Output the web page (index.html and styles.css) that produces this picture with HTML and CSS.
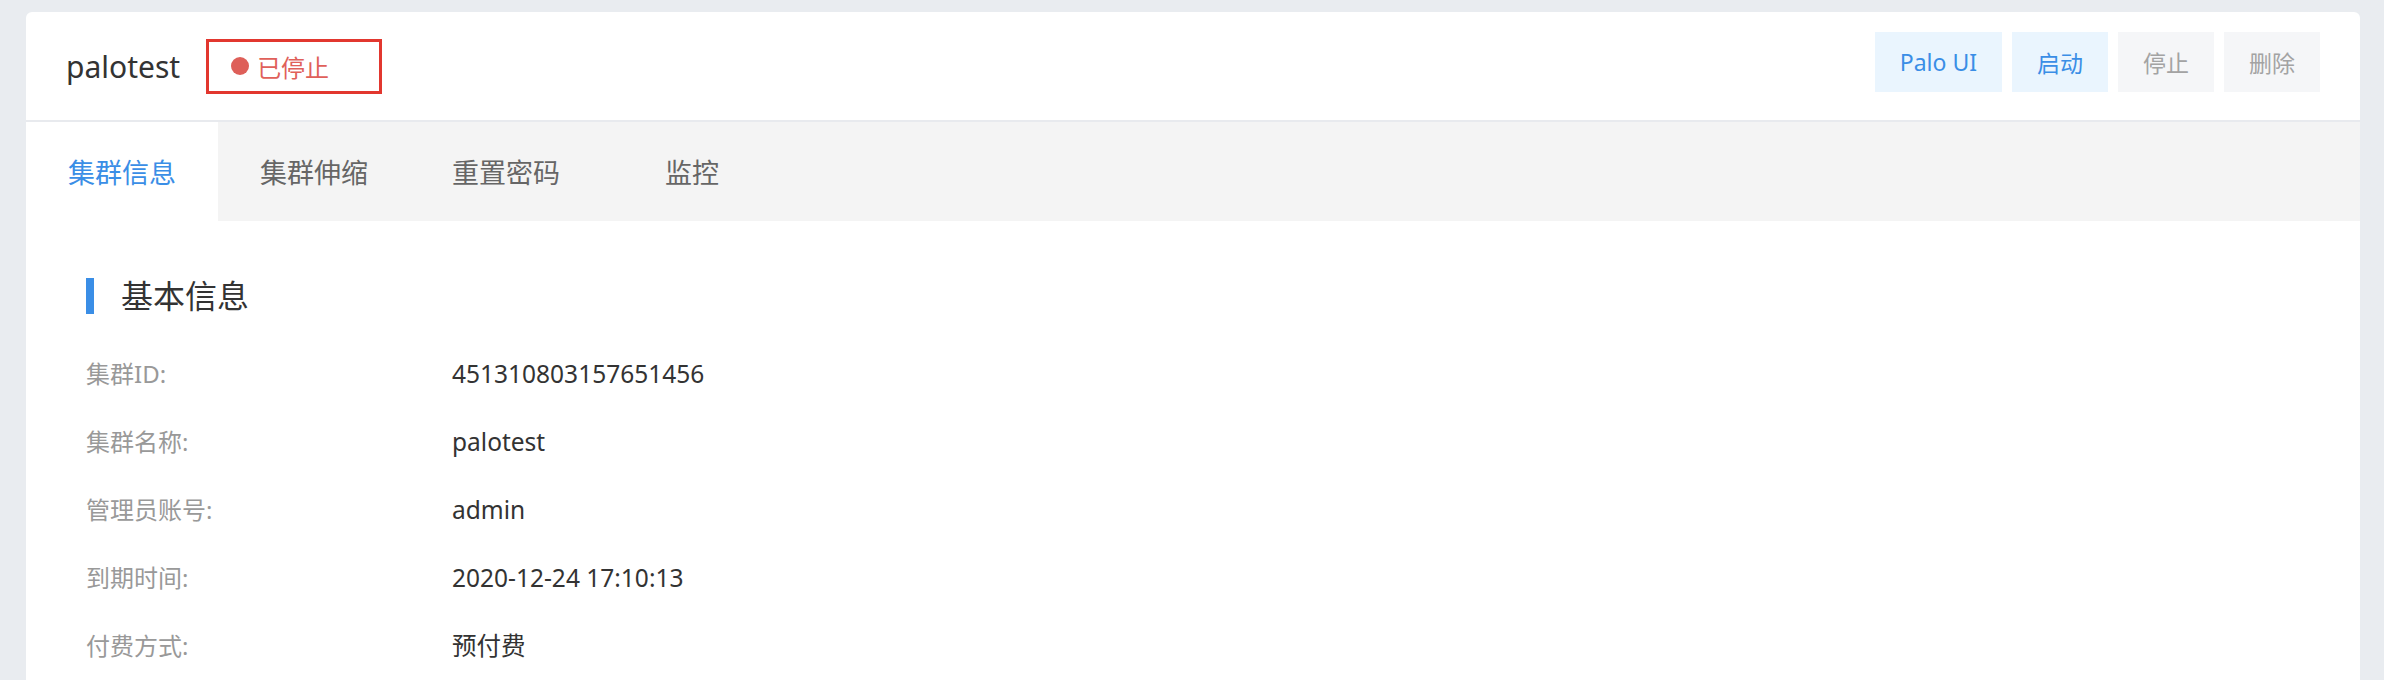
FILE: index.html
```html
<!DOCTYPE html>
<html>
<head>
    <link rel="stylesheet" href="styles.css">
</head>
<body>

<div class="card">
    <div class="header">
        <div class="title">palotest</div>
        <div class="status"><span class="dot"></span>已停止</div>
        <div class="actions">
            <button class="btn btn-primary">Palo UI</button>
            <button class="btn btn-primary">启动</button>
            <button class="btn btn-disabled">停止</button>
            <button class="btn btn-disabled">删除</button>
        </div>
    </div>

    <div class="tabs">
        <div class="tab active">集群信息</div>
        <div class="tab">集群伸缩</div>
        <div class="tab">重置密码</div>
        <div class="tab tab-last">监控</div>
    </div>

    <div class="content">
        <div class="section-title">基本信息</div>
        <div class="info">
            <div class="row"><span class="label">集群ID:</span><span class="value">451310803157651456</span></div>
            <div class="row"><span class="label">集群名称:</span><span class="value">palotest</span></div>
            <div class="row"><span class="label">管理员账号:</span><span class="value">admin</span></div>
            <div class="row"><span class="label">到期时间:</span><span class="value">2020-12-24 17:10:13</span></div>
            <div class="row"><span class="label">付费方式:</span><span class="value">预付费</span></div>
        </div>
    </div>
</div>

</body>
</html>
```

FILE: styles.css
```css
body {
    font-family: "Noto Sans", "Noto Sans CJK SC", sans-serif;
    margin: 0;
    padding: 12px 24px 0 26px;
    background-color: #e9ecf0;
    color: #333;
    height: 668px;
    overflow: hidden;
}
.card {
    background-color: #fff;
    border-radius: 6px 6px 0 0;
    min-height: 800px;
}
.header {
    display: flex;
    align-items: center;
    height: 108px;
    padding: 0 40px 0 40px;
    border-bottom: 2px solid #e8eaee;
}
.title {
    font-size: 30px;
    color: #333;
}
.status {
    display: flex;
    align-items: center;
    box-sizing: border-box;
    height: 55px;
    margin-left: 26px;
    padding: 0 50px 0 22px;
    border: 3px solid #e2372f;
    font-size: 24px;
    color: #e0605a;
}
.dot {
    width: 18px;
    height: 18px;
    border-radius: 50%;
    background-color: #de5f59;
    margin-right: 8px;
}
.actions {
    display: flex;
    gap: 10px;
    margin-left: auto;
    align-self: flex-start;
    margin-top: 20px;
}
.btn {
    font-family: "Noto Sans", "Noto Sans CJK SC", sans-serif;
    font-size: 23px;
    height: 60px;
    padding: 0 25px;
    border: none;
    border-radius: 0;
    cursor: pointer;
}
.btn-primary {
    background-color: #eaf5fe;
    color: #3a8ee6;
}
.btn-disabled {
    background-color: #f5f6f8;
    color: #a3a3a3;
}
.tabs {
    display: flex;
    height: 99px;
    background-color: #f4f4f4;
}
.tab {
    padding: 0 42px;
    line-height: 101px;
    font-size: 27px;
    color: #666;
    cursor: pointer;
}
.tab-last {
    padding-left: 63px;
}
.tab.active {
    background-color: #fff;
    color: #3a8ee6;
}
.content {
    padding: 57px 60px;
}
.section-title {
    height: 36px;
    line-height: 36px;
    border-left: 8px solid #3a8ee6;
    padding-left: 27px;
    font-size: 32px;
    color: #333;
}
.info {
    margin-top: 26px;
}
.row {
    display: flex;
    height: 68px;
    line-height: 68px;
    font-size: 24px;
}
.label {
    width: 366px;
    color: #999;
}
.value {
    font-size: 24.5px;
    color: #333;
}
```
